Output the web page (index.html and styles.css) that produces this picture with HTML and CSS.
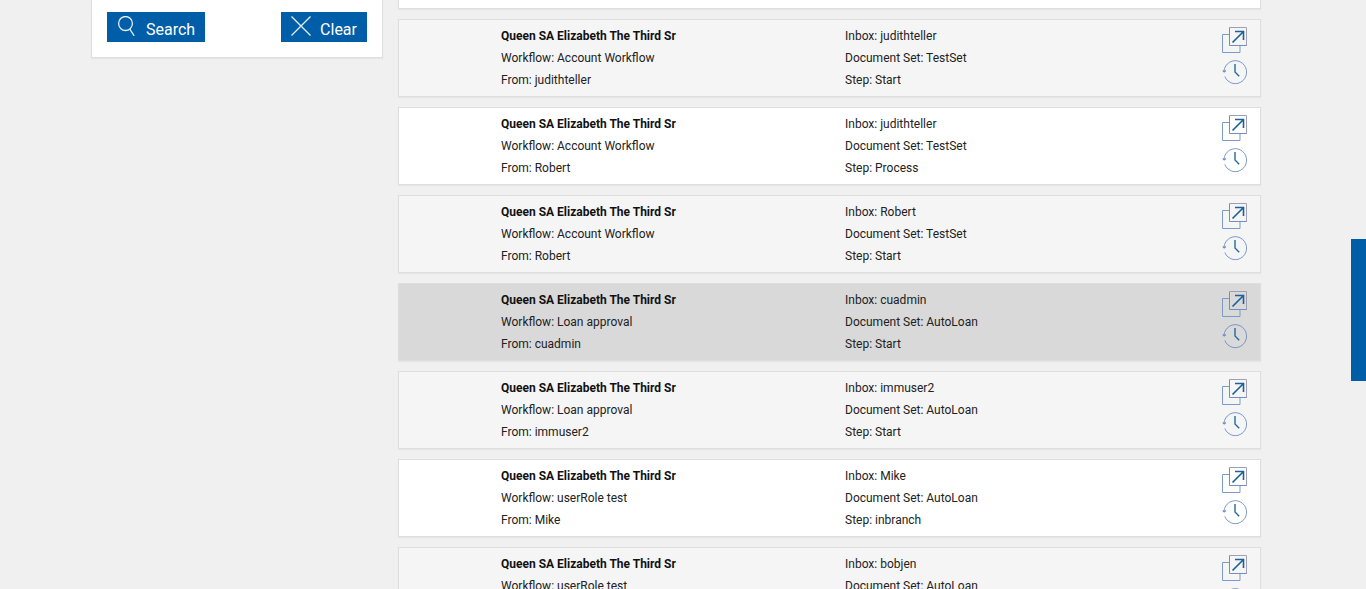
FILE: index.html
```html
<!DOCTYPE html>
<html lang="en">
<head>
<meta charset="utf-8">
<title>Workflow inbox</title>
<link rel="stylesheet" href="styles.css">
</head>
<body>
<svg class="sprite" aria-hidden="true">
  <symbol id="icon-open" viewBox="0 0 26 26">
    <path d="M7 7.500H.5v18h17.500v-7" fill="none" stroke="#7a9cc9"/>
    <path d="M7.500 .5v18h17.500" fill="none" stroke="#6f8fc0"/>
    <path d="M7.500 .5h17v18" fill="none" stroke="#a3a0ad"/>
    <path d="M10.500 15.500L21 5M13 4.500h8.500v8.500" fill="none" stroke="#1d5f9f" stroke-width="1.600"/>
  </symbol>
  <symbol id="icon-history" viewBox="0 0 26 26">
    <path d="M2 12.200A11.300 11.500 0 1 1 2.800 17.500" fill="none" stroke="#6b8fbd" stroke-width=".9"/>
    <path d="M.8 11.500l1.400 1.400 1.600-1.400" fill="none" stroke="#5f8fba" stroke-width="1.100"/>
    <path d="M13 5v8l4.200 4.200" fill="none" stroke="#2568a5" stroke-width="1.400"/>
  </symbol>
</svg>
<div class="page">
  <form class="filters">
    <button class="button" type="button">
      <svg class="button-icon" viewBox="0 0 20 20" aria-hidden="true"><ellipse cx="8.500" cy="7.500" rx="6.900" ry="7"/><path d="M12.800 13.200L17.200 19.800"/></svg>
      <span class="button-label">Search</span>
    </button>
    <button class="button" type="reset">
      <svg class="button-icon" viewBox="0 0 20 20" aria-hidden="true"><path d="M.5 .5l19 19M19.500 .5l-19 19"/></svg>
      <span class="button-label">Clear</span>
    </button>
  </form>
  <main class="results" id="results"></main>
</div>
<button class="drawer-tab" type="button" aria-label="Open side panel"></button>
<script src="app.js"></script>
</body>
</html>
```

FILE: styles.css
```css
* { box-sizing: border-box; }

body {
  height: 100vh;
  margin: 0;
  overflow: hidden;
  background: #f0f0f0;
  color: #222;
  font: 12px/22px Roboto, "Liberation Sans", sans-serif;
}

.sprite { display: none; }

.page {
  display: flex;
  align-items: flex-start;
  gap: 15px;
  padding: 0 105px 0 91px;
}

.filters {
  display: flex;
  flex: 0 0 292px;
  justify-content: space-between;
  padding: 12px 15px 15px;
  border: 1px solid #dedede;
  border-top: 0;
  background: #fff;
  box-shadow: 0 1px 1px #e6e6e6;
}

.button {
  display: flex;
  align-items: center;
  gap: 9px;
  height: 30px;
  padding: 0 10px;
  border: 0;
  background: #005da8;
  color: #fff;
  font: 16px/20px Roboto, "Liberation Sans", sans-serif;
}

.button-icon {
  width: 20px;
  height: 20px;
  margin-bottom: 2px;
  fill: none;
  stroke: #e4eef7;
  stroke-width: 1.3;
}

.button-label { padding-top: 6px; }

.results {
  display: flex;
  flex: 1;
  flex-direction: column;
  gap: 10px;
}

.card {
  display: grid;
  grid-template-columns: 344px 1fr auto;
  padding: 5px 12px 5px 102px;
  border: 1px solid #dedede;
  background: #f5f5f5;
  box-shadow: 0 1px 1px #e6e6e6;
}

.card.plain { background: #fff; }
.card.selected { background: #d9d9d9; }

.card.tail {
  padding: 4px;
  border-top: 0;
}

.card p, .card h2 {
  margin: 0;
  font-size: 12px;
}

.card h2 {
  color: #111;
  font-weight: 700;
}

.actions {
  display: flex;
  flex-direction: column;
  gap: 6px;
  padding-top: 2px;
}

.action {
  width: 26px;
  height: 26px;
  padding: 0;
  border: 0;
  background: none;
}

.action svg {
  display: block;
  width: 26px;
  height: 26px;
}

.drawer-tab {
  position: fixed;
  top: 239px;
  right: 0;
  width: 15px;
  height: 142px;
  padding: 0;
  border: 0;
  background: #005da8;
}
```

FILE: app.js
```js
const items = [
  ["", "Account Workflow", "judithteller", "judithteller", "TestSet", "Start"],
  ["plain", "Account Workflow", "Robert", "judithteller", "TestSet", "Process"],
  ["", "Account Workflow", "Robert", "Robert", "TestSet", "Start"],
  ["selected", "Loan approval", "cuadmin", "cuadmin", "AutoLoan", "Start"],
  ["", "Loan approval", "immuser2", "immuser2", "AutoLoan", "Start"],
  ["plain", "userRole test", "Mike", "Mike", "AutoLoan", "inbranch"],
  ["", "userRole test", "bobjen", "bobjen", "AutoLoan", "Start"]
];

const card = ([state, workflow, from, inbox, set, step]) => `
  <article class="card ${state}">
    <div>
      <h2>Queen SA Elizabeth The Third Sr</h2>
      <p>Workflow: ${workflow}</p>
      <p>From: ${from}</p>
    </div>
    <div>
      <p>Inbox: ${inbox}</p>
      <p>Document Set: ${set}</p>
      <p>Step: ${step}</p>
    </div>
    <div class="actions">
      <button class="action" type="button" aria-label="Open"><svg><use href="#icon-open"/></svg></button>
      <button class="action" type="button" aria-label="History"><svg><use href="#icon-history"/></svg></button>
    </div>
  </article>`;

document.getElementById("results").innerHTML =
  '<div class="card plain tail"></div>' + items.map(card).join("");
```
